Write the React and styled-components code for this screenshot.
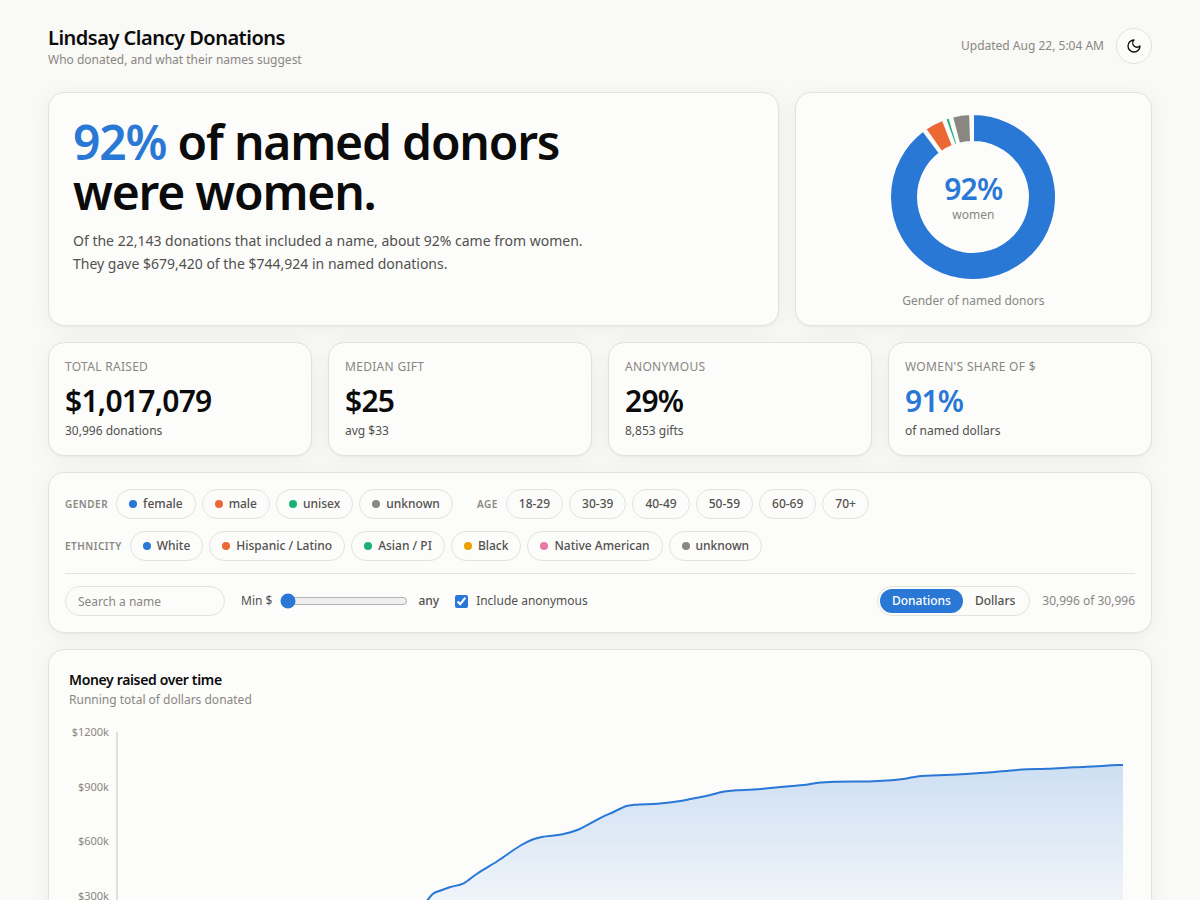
// src/App.jsx
import React, { useState } from "react";
import styled, { createGlobalStyle } from "styled-components";

const GlobalStyle = createGlobalStyle`
  :root {
    --page: #f9f9f7;
    --card: #fcfcfb;
    --border: #e2e2df;
    --ink: #0b0b0b;
    --ink-2: #52514e;
    --muted: #898781;
    --blue: #2a78d6;
    --orange: #eb6834;
    --green: #1baf7a;
    --yellow: #eda100;
    --pink: #e87ba4;
  }

  * {
    box-sizing: border-box;
  }

  body {
    margin: 0;
    background: var(--page);
    color: var(--ink);
    font-family: "Noto Sans", sans-serif;
    font-size: 12px;
    line-height: 16px;
  }

  button,
  input {
    font: inherit;
    color: inherit;
  }

  h1,
  h2,
  p {
    margin: 0;
  }
`;

const Page = styled.main`
  display: flex;
  flex-direction: column;
  gap: 16px;
  max-width: 1200px;
  margin: 0 auto;
  padding: 24px 48px;
`;

const Header = styled.header`
  display: flex;
  align-items: center;
  justify-content: space-between;
  margin-bottom: 8px;
`;

const SiteTitle = styled.h1`
  font-size: 20px;
  line-height: 28px;
  font-weight: 600;
  letter-spacing: -0.025em;
`;

const Muted = styled.p`
  color: var(--muted);
`;

const HeaderRight = styled.div`
  display: flex;
  align-items: center;
  gap: 12px;
`;

const ThemeButton = styled.button`
  display: grid;
  place-items: center;
  width: 36px;
  height: 36px;
  padding: 0;
  border: 1px solid var(--border);
  border-radius: 50%;
  background: var(--card);
  color: var(--ink);
  cursor: pointer;
`;

const Card = styled.section`
  background: var(--card);
  border: 1px solid var(--border);
  border-radius: 16px;
  padding: ${(p) => p.$pad || 16}px;
  box-shadow: 0 1px 2px rgba(11, 11, 11, 0.04), 0 4px 24px rgba(11, 11, 11, 0.05);
`;

const HeroGrid = styled.div`
  display: grid;
  grid-template-columns: repeat(3, 1fr);
  gap: 16px;
`;

const HeroCard = styled(Card)`
  grid-column: span 2;
`;

const Headline = styled.h2`
  max-width: 560px;
  font-size: 48px;
  line-height: 50px;
  font-weight: 600;
  letter-spacing: -0.025em;
`;

const Accent = styled.span`
  color: var(--blue);
`;

const HeroText = styled.p`
  max-width: 512px;
  margin-top: 12px;
  font-size: 14px;
  line-height: 23px;
  color: var(--ink-2);
`;

const DonutCard = styled(Card)`
  display: flex;
  flex-direction: column;
  align-items: center;
  gap: 8px;
`;

const DonutBox = styled.div`
  display: grid;
  place-items: center;

  > * {
    grid-area: 1 / 1;
  }
`;

const DonutLabel = styled.div`
  text-align: center;
  color: var(--muted);
`;

const BigNumber = styled.div`
  font-size: 30px;
  line-height: 36px;
  font-weight: 600;
  letter-spacing: -0.025em;
  color: ${(p) => (p.$accent ? "var(--blue)" : "var(--ink)")};
`;

const StatGrid = styled.div`
  display: grid;
  grid-template-columns: repeat(4, 1fr);
  gap: 16px;
`;

const StatLabel = styled.div`
  margin-bottom: 8px;
  text-transform: uppercase;
  letter-spacing: 0.025em;
  color: var(--muted);
`;

const StatNote = styled.div`
  margin-top: 4px;
  color: var(--ink-2);
`;

const FilterCard = styled(Card)`
  display: flex;
  flex-direction: column;
  gap: 12px;
`;

const FilterGroups = styled.div`
  display: flex;
  flex-wrap: wrap;
  gap: 12px 24px;
`;

const FilterGroup = styled.div`
  display: flex;
  flex-wrap: wrap;
  align-items: center;
  gap: 6px;
`;

const GroupLabel = styled.span`
  margin-right: 2px;
  font-size: 10px;
  font-weight: 600;
  letter-spacing: 0.05em;
  text-transform: uppercase;
  color: var(--muted);
`;

const Chip = styled.button`
  display: inline-flex;
  align-items: center;
  gap: 6px;
  padding: 6px 12px;
  border: 1px solid ${(p) => (p.$on ? "var(--blue)" : "var(--border)")};
  border-radius: 15px;
  background: transparent;
  font-weight: 500;
  color: var(--ink-2);
  cursor: pointer;
`;

const Dot = styled.span`
  width: 8px;
  height: 8px;
  border-radius: 50%;
  background: ${(p) => p.$color};
`;

const Controls = styled.div`
  display: flex;
  flex-wrap: wrap;
  align-items: center;
  gap: 12px 16px;
  padding-top: 12px;
  border-top: 1px solid var(--border);
  color: var(--ink-2);
`;

const SearchInput = styled.input`
  width: 160px;
  height: 30px;
  padding: 0 12px;
  border: 1px solid var(--border);
  border-radius: 15px;
  background: transparent;

  &::placeholder {
    color: var(--muted);
    opacity: 1;
  }
`;

const ControlLabel = styled.label`
  display: flex;
  align-items: center;
  gap: 8px;
`;

const RangeValue = styled.span`
  margin-left: 2px;
  font-weight: 500;
`;

const Range = styled.input`
  width: 128px;
  margin: 0;
  accent-color: var(--blue);
`;

const Checkbox = styled.input`
  width: 13px;
  height: 13px;
  margin: 0;
  accent-color: var(--blue);
`;

const ControlsRight = styled.div`
  display: flex;
  align-items: center;
  gap: 12px;
  margin-left: auto;
  color: var(--muted);
`;

const Toggle = styled.div`
  display: flex;
  padding: 2px;
  border: 1px solid var(--border);
  border-radius: 15px;
`;

const ToggleButton = styled.button`
  padding: 4px 12px;
  border: 0;
  border-radius: 12px;
  font-weight: 500;
  background: ${(p) => (p.$active ? "var(--blue)" : "transparent")};
  color: ${(p) => (p.$active ? "#fff" : "var(--ink-2)")};
  cursor: pointer;
`;

const ChartTitle = styled.h2`
  margin-bottom: 2px;
  font-size: 14px;
  line-height: 20px;
  font-weight: 600;
  letter-spacing: -0.025em;
`;

const Chart = styled.div`
  display: grid;
  grid-template-columns: 40px 1fr;
  column-gap: 7px;
  padding: 16px 8px 24px 0;
`;

const YAxis = styled.div`
  display: flex;
  flex-direction: column;
  justify-content: space-between;
  font-size: 11px;
  text-align: right;
  color: var(--muted);
`;

const Plot = styled.div`
  margin: 8px 0;
  border-left: 2px solid #dededb;
`;

const PlotSvg = styled.svg`
  display: block;
  width: 100%;
  height: 218px;
  overflow: visible;
`;

const donutSlices = [
  { name: "female", color: "var(--blue)", start: 0, end: 323 },
  { name: "male", color: "var(--orange)", start: 325, end: 338.6 },
  { name: "unisex", color: "var(--green)", start: 340.6, end: 343.4 },
  { name: "unknown", color: "var(--muted)", start: 345.4, end: 358 },
];

const stats = [
  { label: "Total raised", value: "$1,017,079", note: "30,996 donations" },
  { label: "Median gift", value: "$25", note: "avg $33" },
  { label: "Anonymous", value: "29%", note: "8,853 gifts" },
  { label: "Women's share of $", value: "91%", note: "of named dollars", accent: true },
];

const filters = [
  {
    label: "Gender",
    options: [
      ["female", "var(--blue)"],
      ["male", "var(--orange)"],
      ["unisex", "var(--green)"],
      ["unknown", "var(--muted)"],
    ],
  },
  {
    label: "Age",
    options: [["18-29"], ["30-39"], ["40-49"], ["50-59"], ["60-69"], ["70+"]],
  },
  {
    label: "Ethnicity",
    options: [
      ["White", "var(--blue)"],
      ["Hispanic / Latino", "var(--orange)"],
      ["Asian / PI", "var(--green)"],
      ["Black", "var(--yellow)"],
      ["Native American", "var(--pink)"],
      ["unknown", "var(--muted)"],
    ],
  },
];

const yTicks = ["$1200k", "$900k", "$600k", "$300k", "$0k"];

// running total, in plot units (1006 wide, 218 high)
const points = [
  [0, 218], [120, 214], [220, 208], [280, 192], [300, 178], [310, 168],
  [315, 162], [323, 158.5], [332, 155.2], [346, 151.3], [359, 142], [380, 129],
  [403, 113.5], [415, 107.5], [424, 105], [445, 102.3], [461, 97.5], [483, 85.8],
  [496, 80], [509, 74], [517, 72.8], [540, 71.7], [563, 69], [578, 66],
  [591, 63.4], [607, 59.4], [618, 58.3], [636, 57.6], [663, 55], [686, 53],
  [701, 50.8], [718, 49.8], [756, 49.2], [788, 46.7], [800, 44.4], [833, 42.8],
  [868, 40.8], [905, 37.6], [930, 36.8], [958, 35.2], [988, 33.8], [995, 33.2],
  [1006, 33],
];

function smoothPath(pts) {
  const slope = (i) => (pts[i + 1][1] - pts[i][1]) / (pts[i + 1][0] - pts[i][0]);
  const tangents = pts.map((_, i) => {
    if (i === 0) return slope(0);
    if (i === pts.length - 1) return slope(i - 1);
    return (slope(i - 1) + slope(i)) / 2;
  });
  let d = `M${pts[0][0]},${pts[0][1]}`;
  for (let i = 1; i < pts.length; i++) {
    const [x0, y0] = pts[i - 1];
    const [x1, y1] = pts[i];
    const h = (x1 - x0) / 3;
    d += `C${x0 + h},${y0 + tangents[i - 1] * h} ${x1 - h},${y1 - tangents[i] * h} ${x1},${y1}`;
  }
  return d;
}

function slicePath(start, end, outer, inner) {
  const at = (deg, r) => {
    const a = (deg * Math.PI) / 180;
    return `${88 + r * Math.sin(a)},${88 - r * Math.cos(a)}`;
  };
  const large = end - start > 180 ? 1 : 0;
  return `M${at(start, outer)}A${outer},${outer} 0 ${large} 1 ${at(end, outer)}L${at(end, inner)}A${inner},${inner} 0 ${large} 0 ${at(start, inner)}Z`;
}

function MoonIcon() {
  return (
    <svg
      width="16"
      height="16"
      viewBox="0 0 24 24"
      fill="none"
      stroke="currentColor"
      strokeWidth="2"
      strokeLinecap="round"
      strokeLinejoin="round"
      aria-hidden="true"
    >
      <path d="M12 3a6 6 0 0 0 9 9 9 9 0 1 1-9-9Z" />
    </svg>
  );
}

function Donut() {
  return (
    <svg width="176" height="176" viewBox="0 0 176 176" aria-hidden="true">
      {donutSlices.map((s) => (
        <path
          key={s.name}
          d={slicePath(s.start, s.end, 83, 55)}
          fill={s.color}
          stroke="var(--card)"
          strokeWidth="2"
        />
      ))}
    </svg>
  );
}

function MoneyChart() {
  const line = smoothPath(points);
  return (
    <Chart>
      <YAxis>
        {yTicks.map((t) => (
          <span key={t}>{t}</span>
        ))}
      </YAxis>
      <Plot>
        <PlotSvg viewBox="0 0 1006 218" preserveAspectRatio="none" aria-hidden="true">
          <defs>
            <linearGradient id="moneyFill" x1="0" y1="0" x2="0" y2="1">
              <stop offset="0" stopColor="#2a78d6" stopOpacity="0.22" />
              <stop offset="1" stopColor="#2a78d6" stopOpacity="0" />
            </linearGradient>
          </defs>
          <path d={`${line}L1006,218L0,218Z`} fill="url(#moneyFill)" />
          <path
            d={line}
            fill="none"
            stroke="var(--blue)"
            strokeWidth="2"
            vectorEffect="non-scaling-stroke"
          />
        </PlotSvg>
      </Plot>
    </Chart>
  );
}

export default function App() {
  const [selected, setSelected] = useState([]);
  const [search, setSearch] = useState("");
  const [min, setMin] = useState(0);
  const [anonymous, setAnonymous] = useState(true);
  const [metric, setMetric] = useState("Donations");

  function toggleChip(id) {
    setSelected((prev) =>
      prev.includes(id) ? prev.filter((x) => x !== id) : [...prev, id]
    );
  }

  return (
    <>
      <GlobalStyle />
      <Page>
        <Header>
          <div>
            <SiteTitle>Lindsay Clancy Donations</SiteTitle>
            <Muted>Who donated, and what their names suggest</Muted>
          </div>
          <HeaderRight>
            <Muted>Updated Aug 22, 5:04 AM</Muted>
            <ThemeButton type="button" aria-label="Toggle theme">
              <MoonIcon />
            </ThemeButton>
          </HeaderRight>
        </Header>

        <HeroGrid>
          <HeroCard $pad={24}>
            <Headline>
              <Accent>92%</Accent> of named donors were women.
            </Headline>
            <HeroText>
              Of the 22,143 donations that included a name, about 92% came from
              women. They gave $679,420 of the $744,924 in named donations.
            </HeroText>
          </HeroCard>
          <DonutCard>
            <DonutBox>
              <Donut />
              <DonutLabel>
                <BigNumber $accent>92%</BigNumber>
                women
              </DonutLabel>
            </DonutBox>
            <Muted>Gender of named donors</Muted>
          </DonutCard>
        </HeroGrid>

        <StatGrid>
          {stats.map((s) => (
            <Card key={s.label}>
              <StatLabel>{s.label}</StatLabel>
              <BigNumber $accent={s.accent}>{s.value}</BigNumber>
              <StatNote>{s.note}</StatNote>
            </Card>
          ))}
        </StatGrid>

        <FilterCard>
          <FilterGroups>
            {filters.map((group) => (
              <FilterGroup key={group.label} role="group" aria-label={group.label}>
                <GroupLabel>{group.label}</GroupLabel>
                {group.options.map(([name, color]) => {
                  const id = `${group.label}:${name}`;
                  const on = selected.includes(id);
                  return (
                    <Chip
                      key={id}
                      type="button"
                      $on={on}
                      aria-pressed={on}
                      onClick={() => toggleChip(id)}
                    >
                      {color && <Dot $color={color} />}
                      {name}
                    </Chip>
                  );
                })}
              </FilterGroup>
            ))}
          </FilterGroups>
          <Controls>
            <SearchInput
              type="text"
              placeholder="Search a name"
              aria-label="Search a name"
              value={search}
              onChange={(e) => setSearch(e.target.value)}
            />
            <ControlLabel>
              Min $
              <Range
                type="range"
                min="0"
                max="500"
                value={min}
                onChange={(e) => setMin(Number(e.target.value))}
              />
              <RangeValue>{min > 0 ? `$${min}` : "any"}</RangeValue>
            </ControlLabel>
            <ControlLabel>
              <Checkbox
                type="checkbox"
                checked={anonymous}
                onChange={(e) => setAnonymous(e.target.checked)}
              />
              Include anonymous
            </ControlLabel>
            <ControlsRight>
              <Toggle>
                {["Donations", "Dollars"].map((m) => (
                  <ToggleButton
                    key={m}
                    type="button"
                    $active={metric === m}
                    aria-pressed={metric === m}
                    onClick={() => setMetric(m)}
                  >
                    {m}
                  </ToggleButton>
                ))}
              </Toggle>
              <span>30,996 of 30,996</span>
            </ControlsRight>
          </Controls>
        </FilterCard>

        <Card $pad={20}>
          <ChartTitle>Money raised over time</ChartTitle>
          <Muted>Running total of dollars donated</Muted>
          <MoneyChart />
        </Card>
      </Page>
    </>
  );
}
